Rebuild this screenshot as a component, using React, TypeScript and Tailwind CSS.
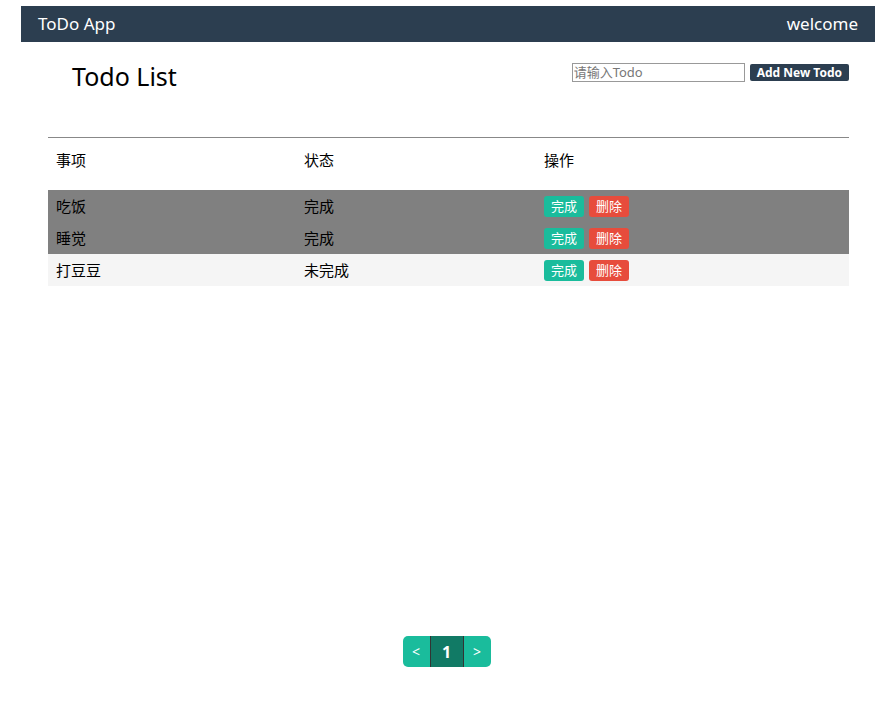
export default function App() {
  const todos = [
    { title: "吃饭", done: true },
    { title: "睡觉", done: true },
    { title: "打豆豆", done: false },
  ];

  return (
    <div
      className="w-full bg-white pt-[6px]"
      style={{ fontFamily: '"Noto Sans", "Noto Sans CJK SC", sans-serif' }}
    >
      <div className="mx-[21px]">
        {/* top bar */}
        <div className="h-[36px] bg-[#2c3e50] flex items-center justify-between px-[17px] text-white text-[17px]">
          <span>ToDo App</span>
          <span>welcome</span>
        </div>

        {/* title + add form */}
        <div className="flex items-start justify-between pl-[51px] pr-[26px] pt-[16px]">
          <h1 className="text-[25px] leading-[36px] text-black">Todo List</h1>
          <div className="flex items-center gap-[5px] pt-[5px]">
            <input
              placeholder="请输入Todo"
              className="w-[173px] h-[19px] border border-[#999] px-[1px] text-[13px] text-black placeholder:text-[#777] outline-none"
            />
            <button className="h-[17px] px-[7px] rounded-[2px] bg-[#2c3e50] text-white text-[12px] font-bold leading-[17px]">
              Add New Todo
            </button>
          </div>
        </div>

        {/* table */}
        <div className="ml-[27px] mr-[26px] mt-[43px] border-t border-[#888] text-[15px] text-black">
          <div className="grid grid-cols-[248px_240px_1fr] h-[52px] items-start pt-[12px] leading-[20px]">
            <div className="pl-[8px]">事项</div>
            <div className="pl-[8px]">状态</div>
            <div className="pl-[8px]">操作</div>
          </div>
          {todos.map((t) => (
            <div
              key={t.title}
              className={`grid grid-cols-[248px_240px_1fr] h-[32px] items-center ${
                t.done ? "bg-[#808080]" : "bg-[#f5f5f5]"
              }`}
            >
              <div className="pl-[8px]">{t.title}</div>
              <div className="pl-[8px]">{t.done ? "完成" : "未完成"}</div>
              <div className="pl-[8px] flex gap-[5px]">
                <button className="h-[21px] px-[7px] rounded-[3px] bg-[#1abc9c] text-white text-[13px] leading-[21px]">
                  完成
                </button>
                <button className="h-[21px] px-[7px] rounded-[3px] bg-[#e74c3c] text-white text-[13px] leading-[21px]">
                  删除
                </button>
              </div>
            </div>
          ))}
        </div>

        {/* pagination */}
        <div className="flex justify-center mt-[350px] pr-[3px] pb-[40px]">
          <div className="flex h-[31px] rounded-[5px] overflow-hidden text-white text-[14px]">
            <button className="w-[28px] bg-[#1abc9c] border-r border-[#333]">&lt;</button>
            <button className="w-[33px] bg-[#117a65] font-bold text-[16px] border-r border-[#333]">1</button>
            <button className="w-[27px] bg-[#1abc9c]">&gt;</button>
          </div>
        </div>
      </div>
    </div>
  );
}
